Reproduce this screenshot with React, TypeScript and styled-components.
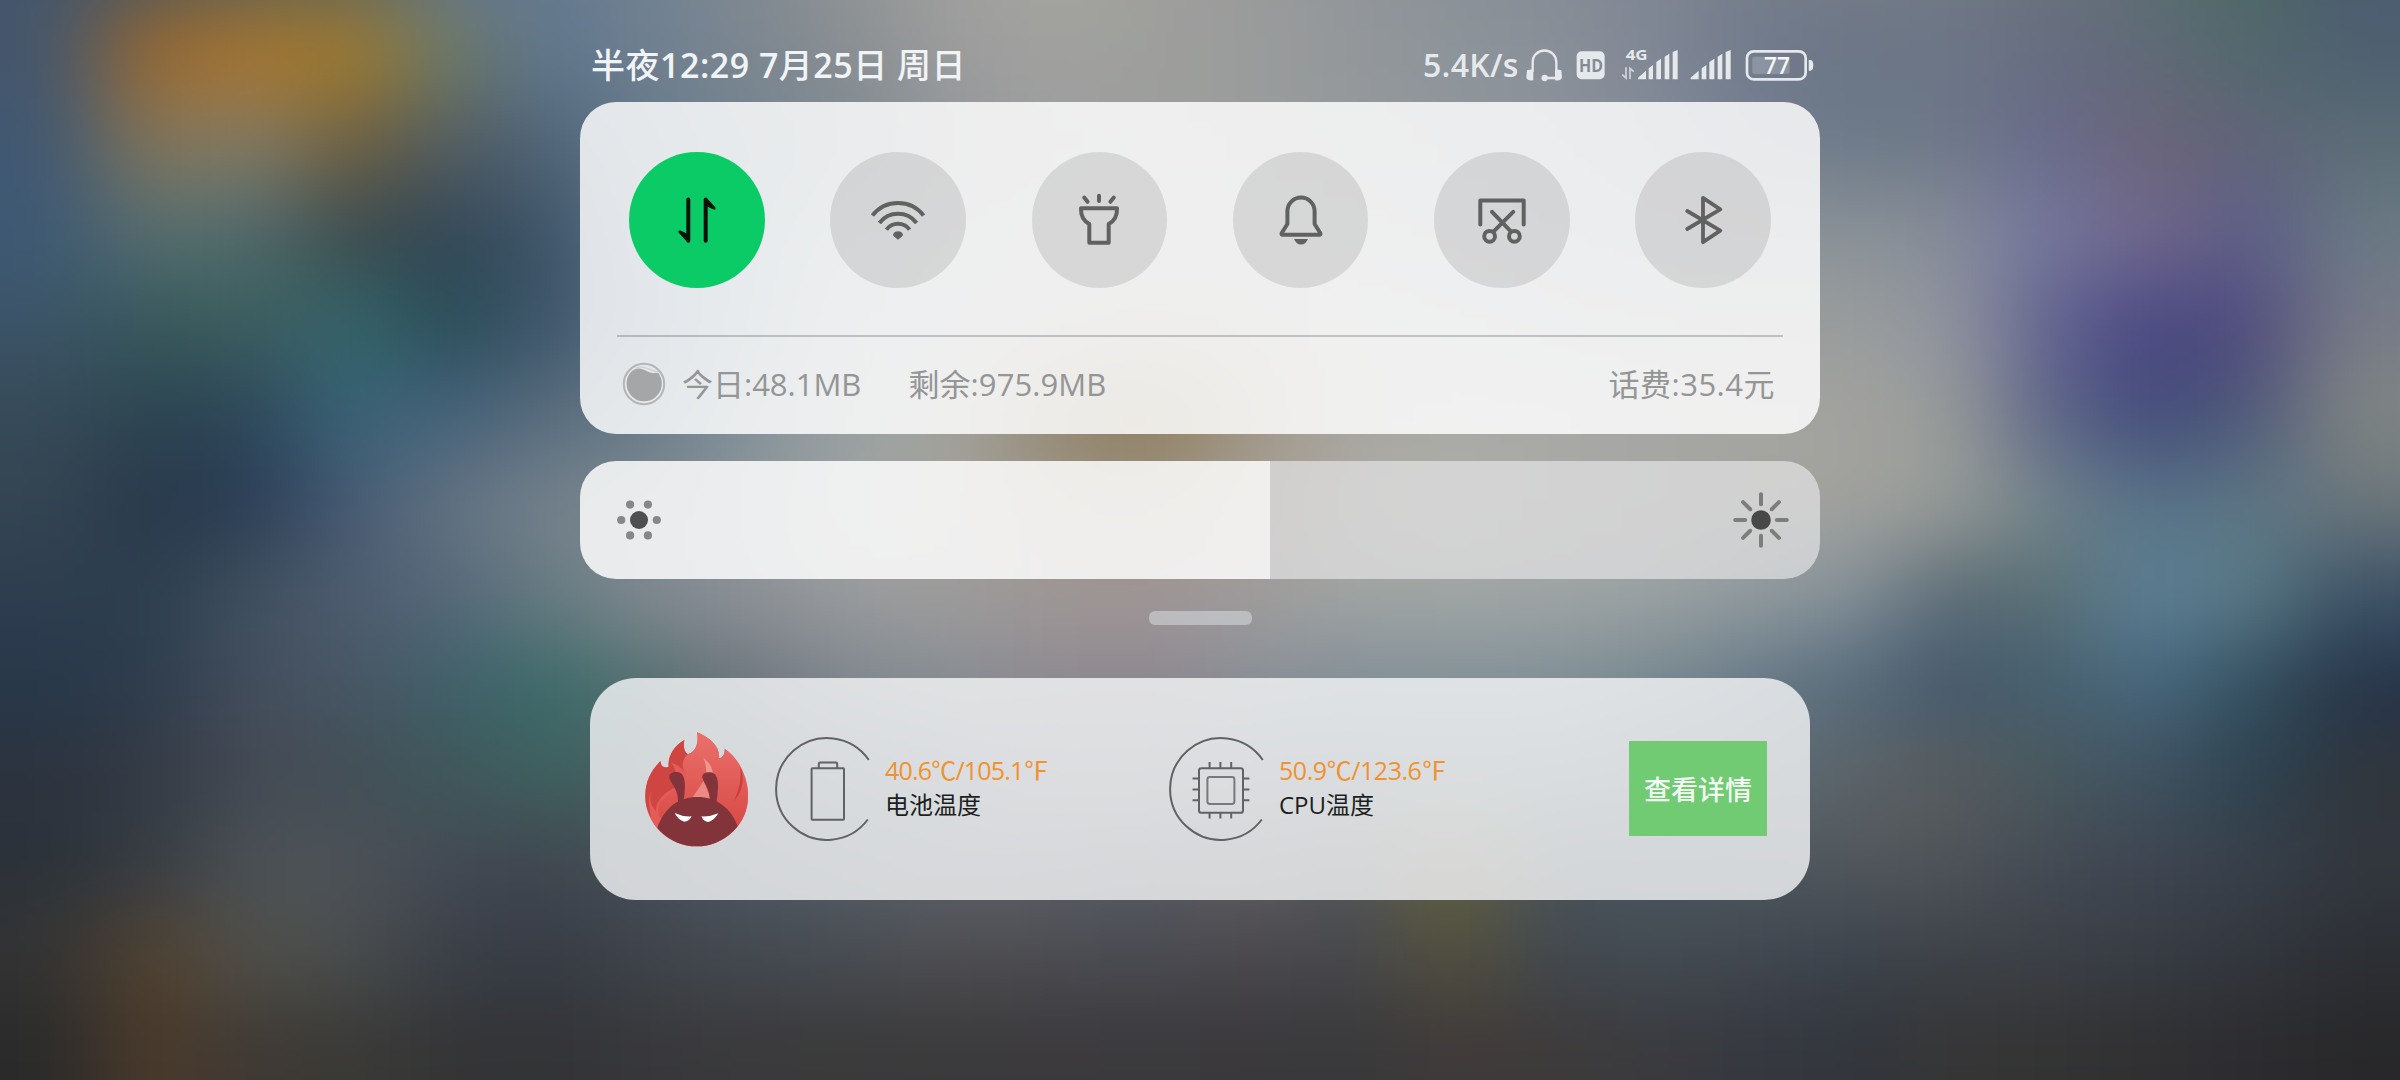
import React from "react";
import styled, { createGlobalStyle } from "styled-components";

const GlobalStyle = createGlobalStyle`
  * { box-sizing: border-box; }
  html, body { margin: 0; padding: 0; background: #2c3038; }
  body { font-family: "Open Sans", "Noto Sans CJK SC", sans-serif; }
  svg { display: block; flex: none; }
`;

/* Wallpaper: coarse colour field, one hex per 100x90 cell, softened by a blur.
   The first row lies just above the visible area. */
const FIELD = [
  "44566c 505658 5c6058 606458 64768a 64788e 728292 808a92 909496 a0a09e a4a4a0 a09e9c 9a9a9a 92969a 8a9098 868c96 808694 767e8a 787e88 727a86 6a727c 5c6e72 4c6864 4c5c70",
  "44566c 9c682e aa762c a47c2a 6c7a66 5f7690 708090 7c8690 8a8e92 9c9c9c a1a29f 9ea09c 9a9c9c 94979a 8c949a 8a9098 808896 717b8c 6a7486 6c7686 666c80 606a78 52686c 4d6070",
  "405872 82755a 847c68 6e6040 525c62 4d6478 687a8a 74848f 7c8a92 94969c 9c9c9e 9c9e9c 9a9c9c 969a9c 90969c 8c929a 848c98 747e8e 6c7a88 6e7888 686a8c 6c6478 606478 5c6c76",
  "3e5974 566e70 506a6e 3c4a4c 324656 3e5468 60768a 788a96 8c989e 989ea0 a0a2a4 a2a2a2 a0a2a0 9ca0a2 969ca2 9298a0 8e949c 8a9298 8a9298 868c98 74769e 72688a 5c5c88 6a7a84",
  "3c5468 36585a 3c5e5e 34666a 284c56 3e546a 587088 7c8c98 949ea4 9ea4a6 a4a2a0 a49e98 a2a09c a4a6a4 a0a4a4 9ca0a4 9a9ea0 989c9c 9a9d9c 9094a0 626290 484684 504c7c 787a88",
  "364a58 2c4450 2e465a 386478 44607a 586c7c 6a7c8a 84929a 98a0a2 a4a49e 948874 8c7a56 a09684 a8a6a0 aaaaa6 a8aaa6 a6a8a4 a4a4a0 a3a39f 989c98 5c6488 424a7a 4e5878 808684",
  "344452 28384a 2a3c54 465a74 647382 75828c 7c8890 8c949a a0a4a4 a4a29c 9c9486 9c9280 a49c92 acaaa4 aeaeaa a9a9a6 a7a7a3 a4a49f a2a29e 989c98 70828a 567286 5c7684 6c767c",
  "2e3e50 2c3e4e 40505f 4f5d70 56687a 687c82 848a92 8e9298 9a9c9e 9e9c9c a09898 a09698 a09c9c a0a4a2 a0a6a4 a0a5a4 9ba3a4 919ba0 86929a 5a6a76 5a7074 5e8098 5a7a86 3c5266",
  "28384a 2e3c4c 444e5e 485664 40606a 3a6c6a 567072 70767e 808890 888e94 8e8a90 8e888e 8a9098 84909a 84929a 80909a 788890 687a88 566a7a 44586c 46606e 486880 345060 26344a",
  "2c333e 343a44 444a54 424e56 3f575a 3e6260 485c60 5c666e 666e78 6c747e 747a82 747a80 6e7680 6c7680 707a80 6c7880 667078 5c6a74 5c656a 585c5e 48585e 405260 2c4250 30363c",
  "2b323a 363c44 4c5256 4e5259 434954 40464e 48505a 505862 565e66 5c626a 5e6068 565a62 625f64 50545a 666440 4a525a 4c565e 4c565e 52575c 50545a 434a54 3e4652 38404a 33373f",
  "343434 54432f 50504a 4a4e4e 3a3f48 363c46 40444c 444a52 484c54 504f52 4c4d52 4a4c54 4c494c 464850 54503a 424850 444c54 424850 3c444e 3e4248 3c4048 383c44 33363e 2c2f34",
  "2a2a2a 4c3a2a 3f3934 3a3a36 343436 323336 38383b 3a393b 3a3a3a 3a3a3c 3b393c 3a393c 3a383b 38383a 403a3a 3e3a3a 3a3a3e 363840 32353c 363636 333333 303032 2c2c2f 28282a",
].map((row) => row.split(" "));

const clamp = (v: number, max: number) => Math.max(0, Math.min(max, v));

const Screen = styled.main`
  position: relative;
  width: 2400px;
  height: 1080px;
  overflow: hidden;
`;
const Backdrop = styled.svg`
  position: absolute;
  inset: 0;
`;
const Shade = styled.div`
  position: relative;
  display: flex;
  flex-direction: column;
  align-items: center;
`;
const StatusBar = styled.header`
  width: 1240px;
  height: 102px;
  padding: 28px 6px 0 11px;
  display: flex;
  align-items: center;
  justify-content: space-between;
  color: #f1f4f7;
`;
const Clock = styled.div`
  font-size: 34px;
  font-weight: 600;
  line-height: 48px;
  letter-spacing: 0.5px;
  white-space: pre;
`;
const Han = styled.span`
  font-weight: 500;
`;
const Indicators = styled.div`
  display: flex;
  align-items: center;
  color: #e6e9ec;
`;
const NetSpeed = styled.span`
  font-size: 32px;
  font-weight: 600;
  line-height: 46px;
  letter-spacing: 0.3px;
  width: 103px;
  white-space: nowrap;
`;
const TogglePanel = styled.section`
  width: 1240px;
  height: 332px;
  border-radius: 36px;
  background: rgba(255, 255, 255, 0.83);
  display: flex;
  flex-direction: column;
`;
const Toggles = styled.div`
  display: flex;
  justify-content: space-between;
  padding: 50px 49px 47px;
`;
const Toggle = styled.button<{ $on?: boolean }>`
  width: 135.5px;
  height: 136px;
  padding: 0;
  border: 0;
  border-radius: 50%;
  display: flex;
  align-items: center;
  justify-content: center;
  color: ${(p) => (p.$on ? "#03130a" : "#606262")};
  background: ${(p) => (p.$on ? "#0acb66" : "rgba(0, 0, 0, 0.098)")};
`;
const Divider = styled.hr`
  margin: 0 37px;
  border: 0;
  height: 2px;
  background: rgba(0, 10, 10, 0.2);
`;
const Usage = styled.div`
  flex: 1;
  display: flex;
  align-items: center;
  padding: 0 45px 3px 42px;
  font-size: 31px;
  line-height: 40px;
  color: #949595;
`;
const UsageItem = styled.span<{ $ml?: string; $ls?: number }>`
  margin-left: ${(p) => p.$ml || "0"};
  letter-spacing: ${(p) => p.$ls || 0}px;
  white-space: nowrap;
`;
const Brightness = styled.section`
  width: 1240px;
  height: 118px;
  margin-top: 27px;
  border-radius: 36px;
  overflow: hidden;
  display: flex;
`;
const Filled = styled.div`
  width: 690px;
  padding-left: 36px;
  display: flex;
  align-items: center;
  background: rgba(255, 255, 255, 0.84);
`;
const Rest = styled.div`
  flex: 1;
  padding-right: 29px;
  display: flex;
  align-items: center;
  justify-content: flex-end;
  background: rgba(228, 228, 229, 0.7);
`;
const Handle = styled.div`
  width: 103px;
  height: 14px;
  margin-top: 32px;
  border-radius: 6px;
  background: rgba(224, 232, 236, 0.48);
`;
const Notice = styled.section`
  width: 1220px;
  height: 222px;
  margin-top: 53px;
  padding: 0 43px 0 55px;
  border-radius: 46px;
  background: rgba(244, 245, 246, 0.81);
  display: flex;
  align-items: center;
`;
const Metrics = styled.div`
  margin-left: 26px;
  display: grid;
  grid-template-columns: 394px 394px;
`;
const Metric = styled.div`
  display: flex;
  align-items: center;
`;
const MetricText = styled.div`
  margin-left: 6px;
  padding-bottom: 4px;
  display: flex;
  flex-direction: column;
  white-space: nowrap;
`;
const Reading = styled.span<{ $ls: number }>`
  font-size: 25px;
  line-height: 35px;
  letter-spacing: ${(p) => p.$ls}px;
  color: #f0922f;
`;
const Degree = styled.span`
  font-family: "Noto Sans CJK SC", sans-serif;
`;
const Label = styled.span`
  font-size: 24px;
  line-height: 34px;
  color: #1c1e20;
`;
const Details = styled.button`
  width: 138px;
  height: 95px;
  margin: 0 0 1px auto;
  padding: 0;
  border: 0;
  background: #70cb73;
  color: #f3fbf3;
  font: 500 27px/40px "Noto Sans CJK SC", sans-serif;
`;

const Wallpaper = () => (
  <Backdrop width="2400" height="1080" viewBox="0 0 2400 1080">
    <filter id="soften" x="-300" y="-270" width="3000" height="1620" filterUnits="userSpaceOnUse" colorInterpolationFilters="sRGB">
      <feGaussianBlur stdDeviation="47 41" />
    </filter>
    <g filter="url(#soften)" shapeRendering="crispEdges">
      {Array.from({ length: 16 }, (_, r) =>
        Array.from({ length: 28 }, (_, c) => (
          <rect
            key={`${r}-${c}`}
            x={(c - 2) * 100}
            y={(r - 2) * 90 + 8}
            width="100"
            height="90"
            fill={"#" + FIELD[clamp(r - 1, 12)][clamp(c - 2, 23)]}
          />
        ))
      )}
    </g>
  </Backdrop>
);

const Glyph = ({ children }: { children: React.ReactNode }) => (
  <svg width="60" height="60" viewBox="-30 -30 60 60" fill="none" stroke="currentColor" strokeWidth="4" strokeLinecap="round" strokeLinejoin="round">
    {children}
  </svg>
);
const DataIcon = () => (
  <Glyph>
    <path d="M-8.7 -20.5V20.8M8.7 20.8V-20.5" />
    <path d="M-17.3 11.8L-10 15V20ZM17.3 -11.8L10 -15V-20Z" fill="currentColor" strokeWidth="2.6" />
  </Glyph>
);
const WifiIcon = () => (
  <Glyph>
    <g strokeLinecap="butt">
      <path d="M-25.6 -4.4A32.4 32.4 0 0 1 25.6 -4.4" />
      <path d="M-18.6 3A23.4 23.4 0 0 1 18.6 3" />
      <path d="M-11.6 9.6A14.6 14.6 0 0 1 11.6 9.6" />
    </g>
    <path d="M0 11.2C4 11.2 6.2 14.6 4 16.6L0 19.8L-4 16.6C-6.2 14.6 -4 11.2 0 11.2Z" fill="currentColor" stroke="none" />
  </Glyph>
);
const TorchIcon = () => (
  <Glyph>
    <path d="M-18 -11.7H18C18.4 -3 15 1 9.7 4V22.8H-9.7V4C-15 1 -18.4 -3 -18 -11.7Z" />
    <path d="M0 -24.2V-19M-14.8 -22.4L-11.4 -18.2M14.8 -22.4L11.4 -18.2" />
  </Glyph>
);
const BellIcon = () => (
  <Glyph>
    <path d="M-13.6 -8.8A13.6 13.6 0 0 1 13.6 -8.8V4L19.4 13.2Q19.8 14.7 18.4 14.7H-18.4Q-19.8 14.7 -19.4 13.2L-13.6 4Z" />
    <path d="M-7 19H7Q4.6 24.6 0 24.6T-7 19Z" fill="currentColor" stroke="none" />
  </Glyph>
);
const CutIcon = () => (
  <Glyph>
    <path d="M-21.7 4.5V-19.6H21.7V4.5" />
    <path d="M-10 -8.2L8.6 11.2M11.2 -8.2L-8 11.2" />
    <circle cx="-12.4" cy="16.3" r="5.4" />
    <circle cx="12.4" cy="16.3" r="5.4" />
  </Glyph>
);
const BluetoothIcon = () => (
  <Glyph>
    <path d="M-15.8 -9L17.3 10.6L0 22.2V-22.2L17.3 -10.6L-15.8 9" strokeWidth="3.8" />
  </Glyph>
);

/* Connection and power indicators of the status bar */
const StatusIcons = () => (
  <svg width="288" height="52" viewBox="376 26 864 156" fill="none" stroke="currentColor">
    <path d="M396 124V95A35 34 0 0 1 467 95V124M436 143H466L474 134" strokeWidth="7" />
    <path d="M380 120Q390 116 399 118V150Q378 152 378 140ZM483 120Q473 116 464 118V150Q485 152 485 140Z" fill="currentColor" stroke="none" transform="translate(-1 0)" />
    <circle cx="432" cy="143" r="9.5" fill="currentColor" stroke="none" />
    <rect x="528" y="63" width="84" height="84" rx="15" fill="currentColor" stroke="none" />
    <text x="571" y="124" textAnchor="middle" fontSize="51" fontWeight="700" textLength="72" lengthAdjust="spacingAndGlyphs" fill="#838b95" stroke="none">HD</text>
    <text x="675" y="90" fontSize="45" fontWeight="700" textLength="66" lengthAdjust="spacingAndGlyphs" fill="currentColor" stroke="none">4G</text>
    <path d="M676 111V143L665 133M688 146V114L699 124" strokeWidth="5" opacity="0.8" />
    <g fill="currentColor" stroke="none">
      <path d="M712 147V142L736 121V147ZM744 147V114L757 104V147ZM767 147V95L781 85V147ZM792 147V79L806 70V147ZM816 147V65L831 59V147Z" />
      <path d="M870 147V142L894 121V147ZM903 147V114L917 104V147ZM926 147V95L941 85V147ZM951 147V79L965 70V147ZM975 147V65L990 59V147Z" />
    </g>
    <rect x="1039" y="63" width="176" height="84" rx="20" strokeWidth="8" />
    <rect x="1055" y="79" width="112" height="52" rx="6" fill="currentColor" fillOpacity="0.22" stroke="none" />
    <path d="M1224 89H1230Q1238 91 1238 105T1230 121H1224Z" fill="currentColor" stroke="none" />
    <text x="1129" y="131" textAnchor="middle" fontSize="69" fontWeight="600" textLength="78" lengthAdjust="spacingAndGlyphs" fill="#f4f6f8" stroke="none">77</text>
  </svg>
);

const TrafficBall = () => (
  <svg width="44" height="44" viewBox="-22 -22 44 44">
    <circle r="20.2" fill="none" stroke="#b3b5b6" strokeWidth="2" />
    <path d="M-12.6 -12.4C-7 -18 -1 -15 3 -12.8C7 -10.8 10 -11 14 -11.2A17.6 17.6 0 1 1 -12.6 -12.4Z" fill="#a5a6a7" />
    <path d="M-8 -15.8C0 -19 5 -14 13.6 -12" fill="none" stroke="#d0d1d2" strokeWidth="1.4" />
  </svg>
);

const DimIcon = () => (
  <svg width="46" height="50" viewBox="-23 -25 46 50" fill="#868787">
    <circle r="9" fill="#4e4f50" />
    {[0, 60, 120, 180, 240, 300].map((a) => (
      <circle key={a} cx={17.8 * Math.cos((a * Math.PI) / 180)} cy={17.8 * Math.sin((a * Math.PI) / 180)} r="4.1" />
    ))}
  </svg>
);
const SunIcon = () => (
  <svg width="60" height="60" viewBox="-30 -30 60 60" stroke="#7c7d7d" strokeWidth="4" strokeLinecap="round">
    <circle r="9.8" fill="#474847" stroke="none" />
    {[0, 45, 90, 135, 180, 225, 270, 315].map((a) => (
      <path key={a} d={a % 90 ? "M15.2 0H25.4" : "M15.8 0H25.8"} transform={`rotate(${a})`} />
    ))}
  </svg>
);

const Logo = () => (
  <svg width="104" height="115" viewBox="194 185 312 345">
    <defs>
      <linearGradient id="flame" x1="0" y1="0" x2="0" y2="1">
        <stop offset="0" stopColor="#ea706c" />
        <stop offset="1" stopColor="#d84843" />
      </linearGradient>
      <clipPath id="disc">
        <circle cx="349" cy="374" r="154" />
      </clipPath>
    </defs>
    <path d="M195 380C194 335 212 300 241 272C240 288 250 294 265 290C262 258 280 228 312 209C308 230 312 245 322 252C346 244 356 220 350 186C390 202 420 230 416 264C430 260 434 248 433 235C476 265 504 320 503 378A154 149 0 0 1 195 380Z" fill="#e45b57" />
    <path d="M195 380C194 335 212 300 241 272C240 288 250 294 265 290C262 258 280 228 312 209C308 230 312 245 322 252C336 248 340 244 345 236C326 264 320 284 318 312C306 294 292 282 272 277C288 294 292 320 282 352C250 370 228 388 226 422C210 404 206 384 214 362C204 376 204 400 212 440C200 420 195 400 195 380Z" fill="#cf4541" />
    <path d="M322 252C346 244 356 220 350 186C390 202 420 230 416 264C430 260 434 248 433 235C452 249 468 266 478 285C490 330 478 360 462 392C484 368 494 344 494 322C500 340 503 358 503 378A154 149 0 0 1 455 486L300 480L240 440C216 404 260 372 290 356L318 312C300 290 306 268 322 252Z" fill="url(#flame)" />
    <path d="M478 285C494 325 490 360 460 394C476 360 486 325 478 285Z" fill="#c93f3c" />
    <path d="M369 262C392 280 400 300 396 318L378 312C378 292 376 278 369 262Z" fill="#ee9690" />
    <path d="M332 388L370 332L392 388Z" fill="#ec8b86" />
    <g clipPath="url(#disc)" fill="#82343a">
      <path d="M231 472C252 410 298 380 352 380S452 412 472 468L440 530H260Z" />
      <path d="M293 396C294 360 278 348 268 326C262 308 280 304 292 305C314 308 318 336 310 390Z" />
      <path d="M388 392C390 358 374 344 366 322C364 308 380 304 392 306C414 310 418 340 408 396Z" />
    </g>
    <path d="M283 428Q308 440 334 438Q326 454 312 454Q294 450 283 428ZM414 429Q388 440 363 438Q370 455 384 455Q402 450 414 429Z" fill="#fff" />
  </svg>
);

const Ring = ({ children }: { children: React.ReactNode }) => (
  <svg width="104" height="104" viewBox="-52 -52 104 104" fill="none" stroke="#606264" strokeWidth="2" strokeLinejoin="round">
    <path d="M41.8 -29A50.9 50.9 0 1 0 40.8 30.5" />
    {children}
  </svg>
);
const BatteryRing = () => (
  <Ring>
    <rect x="-15.4" y="-20.8" width="32.4" height="51.6" rx="0.8" />
    <path d="M-8.2 -20.8V-25Q-8.2 -26.4 -6.8 -26.4H8.8Q10.2 -26.4 10.2 -25V-20.8" />
  </Ring>
);
const ChipRing = () => (
  <Ring>
    <g transform="translate(0 -0.6)">
      <rect x="-22" y="-20.2" width="44" height="44.6" rx="2.4" />
      <rect x="-13.6" y="-11.4" width="27" height="27" rx="2.4" stroke="#77797b" />
      <path d="M-11.4 -20.2V-26.4M-0.6 -20.2V-26.4M10.2 -20.2V-26.4M-11.4 24.4V30M-0.6 24.4V30M10.2 24.4V30M-22 -9.8H-28.4M-22 1H-28.4M-22 11.8H-28.4M22 -9.8H28.4M22 1H28.4M22 11.8H28.4" />
    </g>
  </Ring>
);

export default function App() {
  return (
    <Screen>
      <GlobalStyle />
      <Wallpaper />
      <Shade>
        <StatusBar>
          <Clock><Han>半夜</Han>12:29 7<Han>月</Han>25<Han>日 周日</Han></Clock>
          <Indicators>
            <NetSpeed>5.4K/s</NetSpeed>
            <StatusIcons />
          </Indicators>
        </StatusBar>
        <TogglePanel>
          <Toggles>
            <Toggle $on><DataIcon /></Toggle>
            <Toggle><WifiIcon /></Toggle>
            <Toggle><TorchIcon /></Toggle>
            <Toggle><BellIcon /></Toggle>
            <Toggle><CutIcon /></Toggle>
            <Toggle><BluetoothIcon /></Toggle>
          </Toggles>
          <Divider />
          <Usage>
            <TrafficBall />
            <UsageItem $ml="16px">今日:48.1MB</UsageItem>
            <UsageItem $ml="47px" $ls={0.1}>剩余:975.9MB</UsageItem>
            <UsageItem $ml="auto" $ls={0.5}>话费:35.4元</UsageItem>
          </Usage>
        </TogglePanel>
        <Brightness>
          <Filled><DimIcon /></Filled>
          <Rest><SunIcon /></Rest>
        </Brightness>
        <Handle />
        <Notice>
          <Logo />
          <Metrics>
            <Metric>
              <BatteryRing />
              <MetricText>
                <Reading $ls={-0.8}>40.6<Degree>℃</Degree>/105.1<Degree>℉</Degree></Reading>
                <Label>电池温度</Label>
              </MetricText>
            </Metric>
            <Metric>
              <ChipRing />
              <MetricText>
                <Reading $ls={-0.45}>50.9<Degree>℃</Degree>/123.6<Degree>℉</Degree></Reading>
                <Label>CPU温度</Label>
              </MetricText>
            </Metric>
          </Metrics>
          <Details>查看详情</Details>
        </Notice>
      </Shade>
    </Screen>
  );
}
